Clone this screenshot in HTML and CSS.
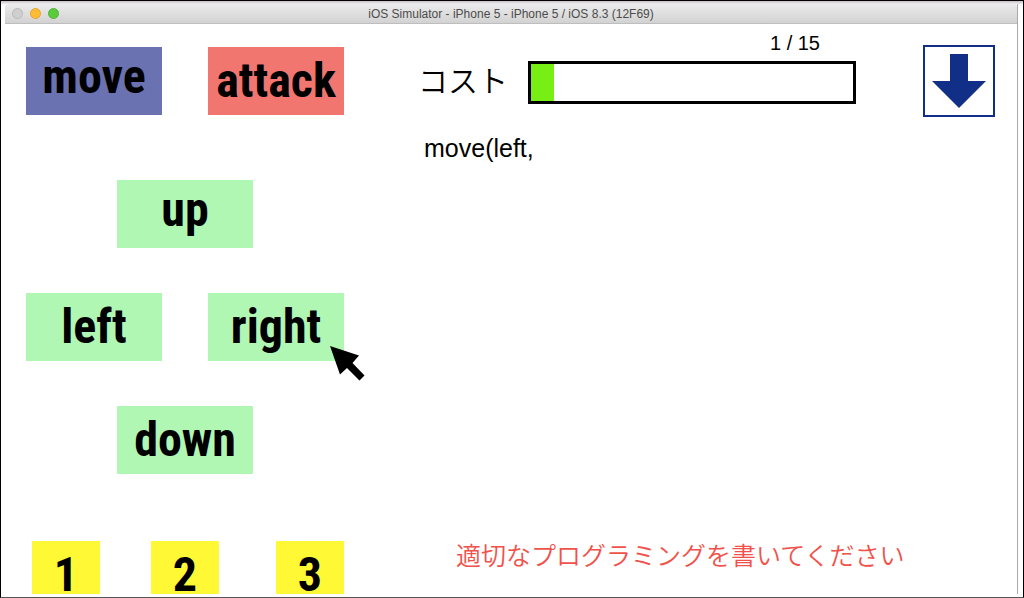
FILE: index.html
```html
<!DOCTYPE html>
<html lang="ja">
<head>
<meta charset="utf-8">
<meta name="viewport" content="width=device-width, initial-scale=1">
<title>iOS Simulator</title>
<link rel="stylesheet" href="styles.css">
</head>
<body>
<div class="frame">
  <div class="window">
    <header class="titlebar">
      <div class="lights">
        <button class="light light-off" type="button" aria-label="Close"></button>
        <button class="light light-yellow" type="button" aria-label="Minimize"></button>
        <button class="light light-green" type="button" aria-label="Zoom"></button>
      </div>
      <h1 class="title">iOS Simulator - iPhone 5 - iPhone 5 / iOS 8.3 (12F69)</h1>
    </header>
    <main class="screen">
      <section class="pad" aria-label="Commands">
        <div class="pair">
          <button class="key key-move key-raised" type="button">move</button>
          <button class="key key-attack" type="button">attack</button>
        </div>
        <div class="directions">
          <button class="key key-raised" type="button">up</button>
          <div class="pair">
            <button class="key" type="button">left</button>
            <div class="hovered">
              <button class="key" type="button">right</button>
              <svg class="cursor" viewBox="0 0 35 35" aria-hidden="true"><path d="M0 0 29 9.500 22.500 17 34.500 29.500 29.500 34.500 17 22 10 28.500Z"/></svg>
            </div>
          </div>
          <button class="key" type="button">down</button>
        </div>
        <div class="numbers">
          <button class="key key-number" type="button">1</button>
          <button class="key key-number" type="button">2</button>
          <button class="key key-number" type="button">3</button>
        </div>
      </section>
      <section class="editor" aria-label="Program">
        <div class="top">
          <div class="cost">
            <span class="cost-label" id="cost">コスト</span>
            <div class="gauge">
              <span class="count">1 / 15</span>
              <div class="bar" role="progressbar" aria-labelledby="cost" aria-valuemin="0" aria-valuemax="15" aria-valuenow="1">
                <div class="fill" style="width: 7%"></div>
              </div>
            </div>
          </div>
          <button class="down" type="button" aria-label="Run">
            <svg class="down-icon" viewBox="0 0 54 54" aria-hidden="true"><path d="M18 0H36V27H54L27 54 0 27H18Z"/></svg>
          </button>
        </div>
        <p class="code">move(left,</p>
        <p class="message">適切なプログラミングを書いてください</p>
      </section>
    </main>
  </div>
</div>
</body>
</html>
```
FILE: styles.css
```css
* {
  box-sizing: border-box;
}

body {
  margin: 0;
  font-family: "Liberation Sans", "Noto Sans CJK JP", sans-serif;
  color: #000;
}

button {
  margin: 0;
  padding: 0;
  border: 0;
  font: inherit;
  color: inherit;
}

.frame {
  height: 100vh;
  padding: 3px 5px 3px 4px;
  border: 1px solid #000;
  border-bottom-color: #555;
  background: linear-gradient(#c4bfc4, #fff 4px);
}

.window {
  display: flex;
  flex-direction: column;
  height: 100%;
  border-right: 1px solid #aaa;
  background: #fff;
}

.titlebar {
  display: grid;
  grid-template-columns: 1fr auto 1fr;
  align-items: center;
  flex: none;
  height: 20px;
  padding: 0 7px;
  border-bottom: 1px solid #bebebe;
  border-radius: 3px 3px 0 0;
  background: linear-gradient(#ebebeb, #d2d2d2);
}

.lights {
  display: flex;
  gap: 7px;
}

.light {
  width: 11px;
  height: 11px;
  border: 1px solid;
  border-radius: 50%;
}

.light-off {
  border-color: #b9b9b9;
  background: #cfcfcf;
}

.light-yellow {
  border-color: #e3a43a;
  background: #fdbc32;
}

.light-green {
  border-color: #4fb53b;
  background: #5bcb3c;
}

.title {
  margin: 0;
  font-size: 12px;
  font-weight: 400;
  line-height: 18px;
  color: #4c4c4c;
}

.screen {
  display: flex;
  flex: 1;
  gap: 74px;
  min-height: 0;
  padding: 21px 22px 0 21px;
  overflow: hidden;
}

.pad {
  display: flex;
  flex: none;
  flex-direction: column;
  width: 318px;
  padding-top: 2px;
}

.pair {
  display: flex;
  justify-content: space-between;
  width: 100%;
}

.directions {
  display: flex;
  flex-direction: column;
  align-items: center;
  gap: 45px;
  padding: 65px 0 67px;
}

.numbers {
  display: grid;
  grid-template-columns: 119px 125px 68px;
  justify-content: end;
}

.key {
  width: 136px;
  height: 68px;
  background: #b1f7b4;
  font-family: "Roboto Condensed", "Noto Sans CJK JP", sans-serif;
  font-size: 48px;
  font-weight: 700;
  line-height: 66px;
}

.key-raised {
  padding-bottom: 8px;
  line-height: 60px;
}

.key-move {
  background: #6b72b2;
}

.key-attack {
  background: #f1766f;
}

.key-number {
  width: 68px;
  background: #fff935;
}

.hovered {
  position: relative;
}

.cursor {
  position: absolute;
  top: 53px;
  left: 122px;
  width: 35px;
  height: 35px;
  pointer-events: none;
}

.editor {
  display: flex;
  flex: 1;
  flex-direction: column;
  min-width: 0;
}

.top {
  display: flex;
  align-items: flex-start;
  gap: 67px;
}

.cost {
  display: flex;
  flex: 1;
  align-items: flex-end;
  gap: 20px;
  margin-top: -12px;
}

.cost-label {
  font-family: "Noto Sans CJK JP", sans-serif;
  font-size: 30px;
  font-weight: 350;
  line-height: 50px;
}

.gauge {
  display: flex;
  flex: 1;
  flex-direction: column;
}

.count {
  align-self: flex-end;
  margin-bottom: 8px;
  padding-right: 36px;
  font-size: 20px;
  line-height: 20px;
}

.bar {
  height: 43px;
  border: 3px solid #000;
}

.fill {
  height: 100%;
  background: #77ef14;
}

.down {
  display: flex;
  align-items: center;
  justify-content: center;
  width: 72px;
  height: 72px;
  border: 2px solid #122f87;
  background: #fff;
}

.down-icon {
  width: 54px;
  height: 54px;
  fill: #122f87;
}

.code {
  margin: 16px 0 0 6px;
  font-size: 25px;
  line-height: 30px;
}

.message {
  margin: auto 0 22px;
  padding-left: 38px;
  font-family: "Noto Sans CJK JP", sans-serif;
  font-size: 25px;
  font-weight: 350;
  line-height: 36px;
  color: #f0524b;
}
```
